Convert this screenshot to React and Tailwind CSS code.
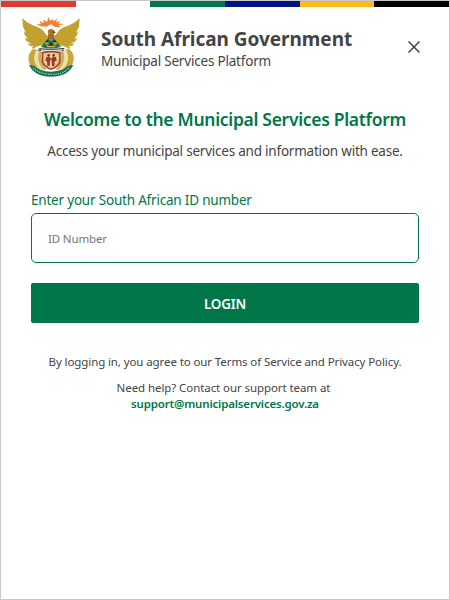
function CoatOfArms() {
  return (
    <svg viewBox="60 48 186 186" className="block size-[62px]" aria-label="Coat of arms">
      {/* rising sun */}
      <path d="M122 79l-13-7 14 1-5-11 12 7 2-11 8 9 6-15 5 12 6-8 4 8 11-8-4 11 14-5-8 8 19 3-18 3 9 5H166l-13-8-14 7z" fill="#ec8433" />
      {/* wheat and tusks around the shield */}
      <path d="M99 148c-23 18-16 54 17 69l14-3c-26-14-32-40-20-66zM208 148c23 18 16 54-17 69l-14-3c26-14 32-40 20-66z" fill="#c9a63c" />
      <path d="M109 149c-12 24-6 50 17 64l8-3c-18-16-22-36-14-59zM198 149c12 24 6 50-17 64l-8-3c18-16 22-36 14-59z" fill="#ecdfae" />
      <path d="M118 153c-8 22-2 44 16 58l6-3c-14-14-19-33-15-54zM189 153c8 22 2 44-16 58l-6-3c14-14 19-33 15-54z" fill="#cdae52" />
      {/* wings */}
      <path d="M67 55c10 10 23 18 35 22 15 5 26 10 34 24l8 9-5 24-24 4-8 4-8 5-4-4 6-4-12-2-6-7 12 2-16-9-5-10 10 4-10-13-2-10 6 4-9-18zM239 55c-10 10-23 18-35 22-15 5-26 10-34 24l-8 9 5 24 24 4 8 4 8 5 4-4-6-4 12-2 6-7-12 2 16-9 5-10-10 4 10-13 2-10-6 4 9-18z" fill="#c2a12c" />
      {/* bird head and neck */}
      <path d="M143 93c2-7 14-9 19-2l5 7-5 1 2 14h-22l3-14z" fill="#a87822" />
      <path d="M158 93l9 5-8 1z" fill="#5f3316" />
      {/* protea diamond */}
      <path d="M153 103l30 38q-30 9-60 0z" fill="#187b55" />
      <path d="M153 104l9 11h-18z" fill="#d45b2c" />
      <path d="M145 116h16l-8 9zM135 131h12l-6 8zM159 131h12l-6 8z" fill="#e4713a" />
      <path d="M142 119l6 8h-12zM164 119l6 8h-12zM153 126l7 10h-14z" fill="#172e23" />
      <path d="M135 129h11M160 129h11M141 140h24" stroke="#e6c44b" strokeWidth="3" />
      {/* crossed spear and knobkierie */}
      <path d="M116 145l76 6M190 145l-76 6" stroke="#514e45" strokeWidth="2.5" />
      <path d="M111 151l12-4v4zM182 145l13-1-6 5z" fill="#28382e" />
      {/* shield */}
      <path d="M125 156q28-7 57 0v25c0 14-14 25-29 29-15-4-28-15-28-29z" fill="#9f3425" />
      <path d="M130 160q23-5 47 0v21c0 11-12 20-24 24-12-4-23-13-23-24z" fill="#e7cf99" stroke="#c8a14f" strokeWidth="2" />
      <circle cx="146" cy="166" r="4" fill="#8d2e22" />
      <circle cx="161" cy="166" r="4" fill="#8d2e22" />
      <path d="M139 171l9-1 5 6 6-6 9 1 2 12-6 1-1 14h-7l-1-15-2-6-3 6-1 15h-7l-1-14-5-1z" fill="#9f3728" />
      {/* motto ribbon */}
      <path d="M87 194c10 24 34 36 66 36s58-12 67-36l-16 4q-15 15-51 17-36-1-50-17z" fill="#167452" />
      <path d="M100 204q18 18 53 19t54-19" fill="none" stroke="#b4ceb5" strokeWidth="3.5" strokeDasharray="4 3" />
    </svg>
  );
}

export default function App() {
  return (
    <div className="flex h-[600px] w-[450px] flex-col border border-[#c8c8c8] bg-white font-['Noto_Sans',sans-serif] text-[#444]">
      <div className="grid h-1.5 shrink-0 grid-cols-6">
        <div className="bg-[#e03c31]" />
        <div className="bg-white" />
        <div className="bg-[#007749]" />
        <div className="bg-[#001489]" />
        <div className="bg-[#ffb81c]" />
        <div className="bg-black" />
      </div>

      <header className="flex h-[78px] items-start pt-[9px] pr-[29px] pl-[19px]">
        <CoatOfArms />
        <div className="flex flex-1 flex-col pt-[10px] pl-[19px] whitespace-nowrap">
          <h1 className="text-[19px] leading-[27px] font-bold tracking-[-0.04px]">South African Government</h1>
          <p className="mt-[-1px] text-[13.5px] leading-[18px] tracking-[-0.2px]">Municipal Services Platform</p>
        </div>
        <button aria-label="Close" className="mt-[25px] text-[#444]">
          <svg viewBox="0 0 12 12" className="block size-3" fill="none" stroke="currentColor" strokeWidth="1.5">
            <path d="M.5 .5l11 11M11.5 .5l-11 11" />
          </svg>
        </button>
      </header>

      <main className="flex flex-col px-[30px] pt-[22px] whitespace-nowrap">
        <h2 className="text-center text-[17.5px] leading-6 font-semibold tracking-[-0.31px] text-[#007749]">Welcome to the Municipal Services Platform</h2>
        <p className="mt-[10px] text-center text-[13.5px] leading-5 tracking-[-0.22px]">Access your municipal services and information with ease.</p>
        <label className="mt-[29px] text-[13.5px] leading-5 tracking-[-0.2px] text-[#007749]">Enter your South African ID number</label>
        <input
          className="mt-[3px] h-[50px] rounded-[5px] border border-[#007749] px-4 text-[11.5px] tracking-[-0.15px] placeholder:text-[#757575]"
          placeholder="ID Number"
        />
        <button className="mt-5 h-10 rounded-[2px] bg-[#007749] pt-0.5 text-[13.5px] font-semibold tracking-[-0.25px] text-white">LOGIN</button>
        <div className="mt-[31px] text-center text-[11.5px] leading-4">
          <p className="tracking-[-0.1px]">By logging in, you agree to our Terms of Service and Privacy Policy.</p>
          <p className="mt-[10px] pr-[3px] tracking-[-0.08px]">Need help? Contact our support team at</p>
          <a className="block font-semibold tracking-[-0.17px] text-[#007749]">support@municipalservices.gov.za</a>
        </div>
      </main>
    </div>
  );
}
